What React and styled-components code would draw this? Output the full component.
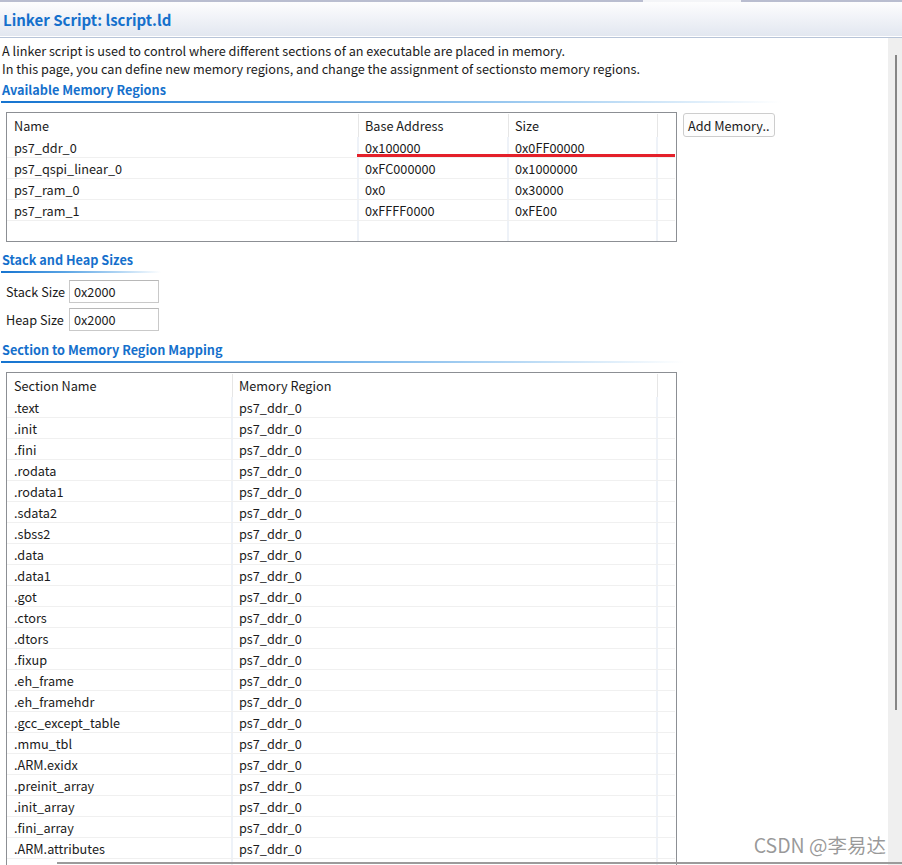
import styled, { createGlobalStyle } from "styled-components"

const GlobalStyle = createGlobalStyle`
  html, body {
    margin: 0;
    padding: 0;
    background: #ffffff;
  }
  body {
    font-family: "Noto Sans CJK SC", "Noto Sans", sans-serif;
    font-size: 12.7px;
    color: #1b1b1b;
  }
`

const blue = "#1570cc"

const regions = [
  ["ps7_ddr_0", "0x100000", "0x0FF00000"],
  ["ps7_qspi_linear_0", "0xFC000000", "0x1000000"],
  ["ps7_ram_0", "0x0", "0x30000"],
  ["ps7_ram_1", "0xFFFF0000", "0xFE00"],
]

const sections = [
  ".text", ".init", ".fini", ".rodata", ".rodata1", ".sdata2", ".sbss2", ".data",
  ".data1", ".got", ".ctors", ".dtors", ".fixup", ".eh_frame", ".eh_framehdr",
  ".gcc_except_table", ".mmu_tbl", ".ARM.exidx", ".preinit_array", ".init_array",
  ".fini_array", ".ARM.attributes",
]

const App = () => {
  return (
    <Page>
      <GlobalStyle />
      <TopEdge>
        <EdgePart />
        <EdgeGap />
        <EdgePart $grow />
      </TopEdge>
      <Header>Linker Script: lscript.ld</Header>
      <Main>
        <Content>
          <Intro>
            A linker script is used to control where different sections of an executable are placed in memory.
            <br />
            In this page, you can define new memory regions, and change the assignment of sectionsto memory regions.
          </Intro>

          <Heading $line="780px" $top="3px">Available Memory Regions</Heading>
          <RegionRow>
            <Table $height="128px">
              <Row $cols="351px 150px 149px 1fr" $head>
                <Cell>Name</Cell>
                <Cell $head>Base Address</Cell>
                <Cell $head>Size</Cell>
                <Cell $head />
              </Row>
              {regions.map((r) => (
                <Row key={r[0]} $cols="351px 150px 149px 1fr">
                  <Cell>{r[0]}</Cell>
                  <Cell $div>{r[1]}</Cell>
                  <Cell $div>{r[2]}</Cell>
                  <Cell $div />
                </Row>
              ))}
              <Row $cols="351px 150px 149px 1fr" $filler>
                <Cell />
                <Cell $div />
                <Cell $div />
                <Cell $div />
              </Row>
              <RedMark />
            </Table>
            <Button>Add Memory..</Button>
          </RegionRow>

          <Heading $line="160px">Stack and Heap Sizes</Heading>
          <Fields>
            <Field>
              <Label>Stack Size</Label>
              <Input>0x2000</Input>
            </Field>
            <Field>
              <Label>Heap Size</Label>
              <Input>0x2000</Input>
            </Field>
          </Fields>

          <Heading $line="683px">Section to Memory Region Mapping</Heading>
          <Table $gap="9px">
            <Row $cols="225px 425px 1fr" $head>
              <Cell>Section Name</Cell>
              <Cell $head>Memory Region</Cell>
              <Cell $head />
            </Row>
            {sections.map((s) => (
              <Row key={s} $cols="225px 425px 1fr">
                <Cell>{s}</Cell>
                <Cell $div>ps7_ddr_0</Cell>
                <Cell $div />
              </Row>
            ))}
            <Row $cols="225px 425px 1fr">
              <Cell />
              <Cell $div />
              <Cell $div />
            </Row>
          </Table>
        </Content>
        <ScrollBar>
          <Thumb />
        </ScrollBar>
      </Main>
      <HScroll />
      <Watermark>CSDN @李易达</Watermark>
    </Page>
  )
}

export default App

const Page = styled.div`
  position: relative;
  width: 902px;
  height: 865px;
  overflow: hidden;
  display: flex;
  flex-direction: column;
`

const TopEdge = styled.div`
  display: flex;
  height: 2px;
`

const EdgePart = styled.div`
  width: ${(p) => (p.$grow ? "auto" : "643px")};
  flex: ${(p) => (p.$grow ? 1 : "none")};
  background: #b9bdd0;
`

const EdgeGap = styled.div`
  width: 98px;
  background: #f4f5f8;
`

const Header = styled.div`
  height: 34px;
  padding-left: 3px;
  display: flex;
  align-items: center;
  font-size: 15px;
  font-weight: bold;
  color: ${blue};
  background: linear-gradient(to bottom, #fdfdfe 0%, #f1f3f8 45%, #e2e7f0 100%);
  border-bottom: 1px solid #ffffff;
  box-shadow: 0 1px 0 #b7c4d8;
  margin-bottom: 1px;
`

const Main = styled.div`
  flex: 1;
  display: flex;
  min-height: 0;
`

const Content = styled.div`
  flex: 1;
  display: flex;
  flex-direction: column;
  padding: 4px 0 0 2px;
  min-width: 0;
`

const Intro = styled.div`
  line-height: 18px;
`

const Heading = styled.div`
  position: relative;
  font-weight: bold;
  color: ${blue};
  line-height: 18px;
  padding-bottom: 4px;
  margin-top: ${(p) => p.$top || "0"};
  &::after {
    content: "";
    position: absolute;
    left: -1px;
    bottom: 0;
    height: 2px;
    width: ${(p) => p.$line};
    background: linear-gradient(to right, #1674d0 0%, #5aa4e4 40%, #b4d7f4 75%, rgba(255, 255, 255, 0) 100%);
  }
`

const RegionRow = styled.div`
  display: flex;
  align-items: flex-start;
  gap: 6px;
  margin-top: 9px;
  margin-bottom: 9px;
`

const Table = styled.div`
  position: relative;
  margin-left: 4px;
  margin-top: ${(p) => p.$gap || "0"};
  width: 669px;
  height: ${(p) => p.$height || "auto"};
  border: 1px solid #8c8f94;
  display: flex;
  flex-direction: column;
  flex-shrink: 0;
`

const Row = styled.div`
  display: grid;
  grid-template-columns: ${(p) => p.$cols};
  height: ${(p) => (p.$head ? "24px" : p.$filler ? "auto" : "21px")};
  flex: ${(p) => (p.$filler ? 1 : "none")};
  border-bottom: ${(p) => (p.$head || p.$filler ? "none" : "1px solid #f0f0f0")};
  box-sizing: border-box;
  margin-right: 1px;
  ${(p) => p.$head && "padding-top: 1px;"}
`

const Cell = styled.div`
  display: flex;
  align-items: center;
  padding-left: ${(p) => (p.$div || p.$head ? "6px" : "7px")};
  white-space: nowrap;
  overflow: hidden;
  border-left: ${(p) =>
    p.$head ? "1px solid #e6e6e6" : p.$div ? "2px solid #eef2f8" : "none"};
  margin-left: ${(p) => (p.$div ? "-1px" : "0")};
`

const RedMark = styled.div`
  position: absolute;
  left: 350px;
  top: 41px;
  width: 318px;
  height: 3px;
  background: #e4202a;
`

const Button = styled.div`
  margin-top: 1px;
  height: 22px;
  padding: 0 4px;
  display: flex;
  align-items: center;
  border: 1px solid #cdcdcd;
  border-radius: 3px;
  background: #fdfdfd;
`

const Fields = styled.div`
  display: flex;
  flex-direction: column;
  gap: 5px;
  margin: 7px 0 10px 4px;
`

const Field = styled.div`
  display: flex;
  align-items: center;
`

const Label = styled.div`
  width: 63px;
  white-space: nowrap;
`

const Input = styled.div`
  width: 84px;
  height: 21px;
  padding-left: 4px;
  display: flex;
  align-items: center;
  border: 1px solid #c9c9c9;
  border-top-color: #b8b8b8;
`

const ScrollBar = styled.div`
  width: 14px;
  background: #efefef;
  display: flex;
  justify-content: center;
  padding-top: 17px;
`

const Thumb = styled.div`
  width: 2px;
  height: 655px;
  margin-left: 2px;
  background: #868686;
`

const HScroll = styled.div`
  position: absolute;
  left: 57px;
  right: 0;
  bottom: 1px;
  height: 2px;
  background: #9b9b9b;
`

const Watermark = styled.div`
  position: absolute;
  right: 16px;
  bottom: 6px;
  font-size: 19.5px;
  color: rgba(120, 120, 120, 0.75);
`
